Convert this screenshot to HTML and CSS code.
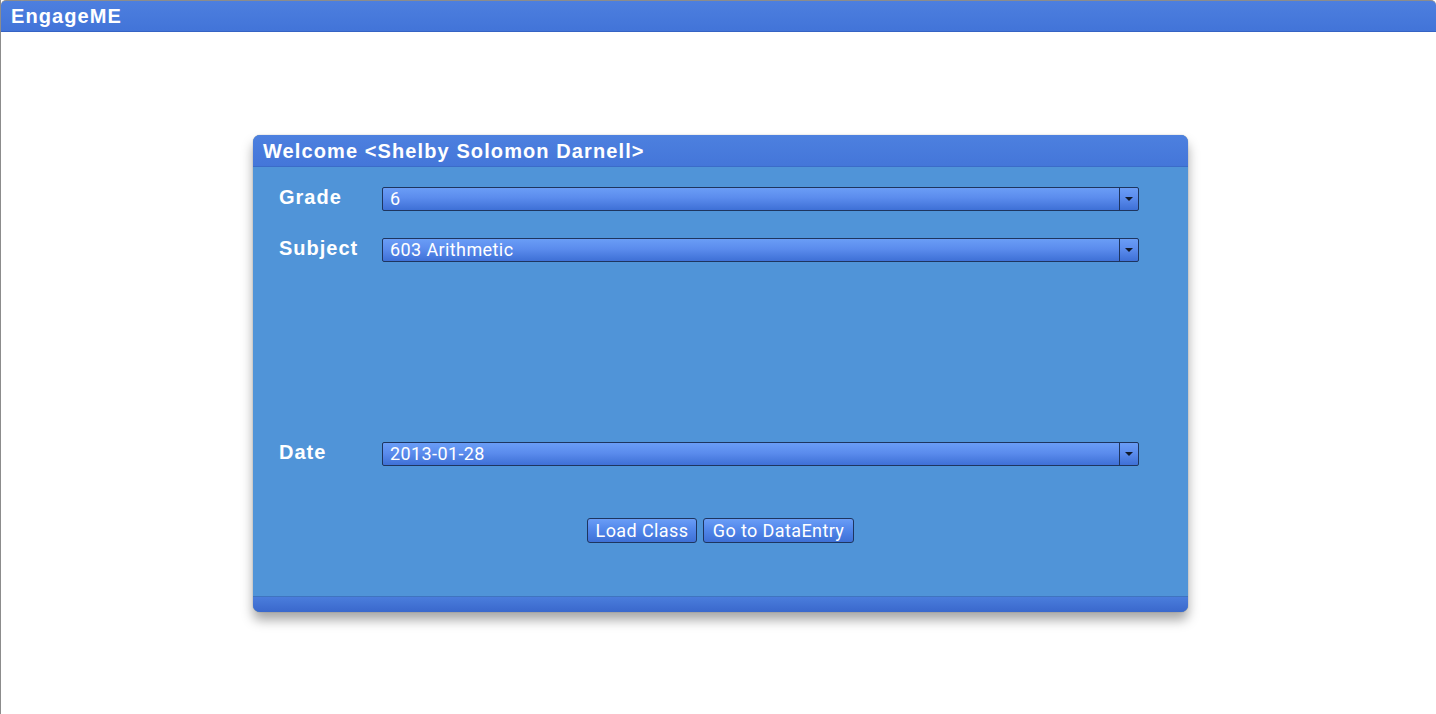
FILE: index.html
```html
<!DOCTYPE html>
<html>
<head>
<meta charset="utf-8">
<link rel="stylesheet" href="styles.css">
</head>
<body>
<div class="app">
  <div class="topbar">EngageME</div>
  <div class="content">
    <div class="panel">
      <div class="panel-head">Welcome &lt;Shelby Solomon Darnell&gt;</div>
      <div class="panel-body">
        <div class="row">
          <div class="label">Grade</div>
          <div class="select"><span class="val">6</span><span class="arrow"></span></div>
        </div>
        <div class="row row2">
          <div class="label">Subject</div>
          <div class="select"><span class="val">603 Arithmetic</span><span class="arrow"></span></div>
        </div>
        <div class="row row3">
          <div class="label">Date</div>
          <div class="select"><span class="val">2013-01-28</span><span class="arrow"></span></div>
        </div>
        <div class="buttons">
          <button class="btn btn1">Load Class</button>
          <button class="btn btn2">Go to DataEntry</button>
        </div>
      </div>
      <div class="panel-foot"></div>
    </div>
  </div>
</div>
</body>
</html>
```
FILE: styles.css
```css
html, body {
  margin: 0;
  padding: 0;
  background: #ffffff;
}
.app {
  height: 714px;
  border-left: 1px solid #8c8c8c;
  box-sizing: border-box;
  font-family: "Liberation Sans", Arial, sans-serif;
}
.topbar {
  height: 32px;
  box-sizing: border-box;
  border-top: 1px solid #8c8c8c;
  border-bottom: 1px solid #3563c4;
  border-radius: 5px 5px 0 0;
  background: linear-gradient(#4d7fdf, #4274d8);
  color: #fff;
  font-weight: bold;
  font-size: 20px;
  letter-spacing: 1.1px;
  line-height: 30px;
  padding-left: 10px;
}
.content {
  padding-top: 103px;
  padding-left: 252px;
}
.panel {
  width: 935px;
  border-radius: 7px;
  overflow: hidden;
  box-shadow: 0 8px 12px rgba(0, 0, 0, 0.35), 0 0 1px rgba(0,0,0,0.5);
  background: #5094d8;
}
.panel-head {
  height: 32px;
  box-sizing: border-box;
  border-bottom: 1px solid #3b6cc8;
  background: linear-gradient(#4d80df, #4476d9);
  color: #fff;
  font-weight: bold;
  font-size: 20px;
  letter-spacing: 1.1px;
  line-height: 32px;
  padding-left: 10px;
}
.panel-body {
  height: 429px;
  box-sizing: border-box;
  padding: 20px 0 0 26px;
}
.row {
  display: flex;
  align-items: center;
  height: 24px;
}
.row2 {
  margin-top: 27px;
}
.row3 {
  margin-top: 180px;
}
.label {
  width: 103px;
  color: #fff;
  font-weight: bold;
  font-size: 20px;
  letter-spacing: 1px;
  line-height: 24px;
  position: relative;
  top: -2px;
}
.select {
  width: 757px;
  height: 24px;
  box-sizing: border-box;
  border: 1px solid #1e355f;
  border-radius: 2px;
  background: linear-gradient(#6a9df6, #5b8ced 45%, #3e70d6);
  display: flex;
  align-items: center;
}
.val {
  flex: 1;
  color: #fff;
  font-family: Roboto, "Liberation Sans", sans-serif;
  font-size: 18px;
  letter-spacing: 0.4px;
  padding-left: 7px;
  line-height: 22px;
}
.arrow {
  width: 18px;
  height: 22px;
  border-left: 1px solid #1e355f;
  display: flex;
  align-items: center;
  justify-content: center;
}
.arrow::after {
  content: "";
  width: 0;
  height: 0;
  border-left: 4px solid transparent;
  border-right: 4px solid transparent;
  border-top: 4px solid #111a2c;
}
.buttons {
  display: flex;
  justify-content: center;
  gap: 6px;
  margin-top: 52px;
  margin-left: -26px;
}
.btn {
  height: 25px;
  box-sizing: border-box;
  border: 1px solid #1e355f;
  border-radius: 3px;
  background: linear-gradient(#6a9df6, #5287ea 45%, #3e70d6);
  color: #fff;
  font-family: Roboto, "Liberation Sans", sans-serif;
  font-size: 18px;
  letter-spacing: 0.4px;
  line-height: 22px;
  padding: 0;
  cursor: pointer;
}
.btn1 { width: 110px; }
.btn2 { width: 151px; }
.panel-foot {
  height: 16px;
  box-sizing: border-box;
  border-top: 1px solid #3f74c0;
  background: linear-gradient(#4a7ddc, #3a68cc);
}
```
